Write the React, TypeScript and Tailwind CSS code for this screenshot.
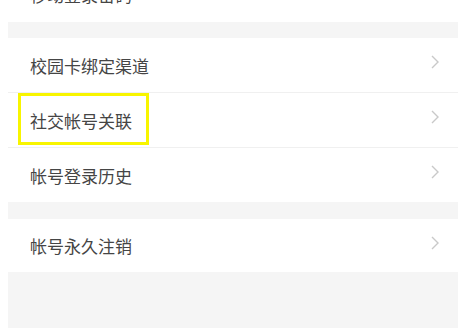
import React from "react";

const font = { fontFamily: '"Noto Sans CJK SC", "Noto Sans", sans-serif' };

function Chevron() {
  return (
    <svg width="10" height="16" viewBox="0 0 10 16" className="-mt-[6px]">
      <path d="M2 2 L8 8 L2 14" fill="none" stroke="#c9c9c9" strokeWidth="1.4" />
    </svg>
  );
}

function Row({
  label,
  border,
  h = "h-[55px]",
  children,
}: {
  label: string;
  border?: boolean;
  h?: string;
  children?: React.ReactNode;
}) {
  return (
    <div
      className={
        "relative flex items-center justify-between bg-white pl-[22px] pr-[18px] " +
        h +
        (border ? " border-b border-[#f0f0f0]" : "")
      }
    >
      <span className="text-[17px] text-[#454545] leading-none">{label}</span>
      <Chevron />
      {children}
    </div>
  );
}

export default function App() {
  return (
    <div className="w-full h-[328px] bg-white pl-[8px] pr-[7px]" style={font}>
      <div className="h-full bg-[#f5f5f5] overflow-hidden">
        {/* partly scrolled-off row */}
        <div className="-mt-[33px]">
          <Row label="移动登录密码" />
        </div>

        {/* account group */}
        <div className="mt-[16px]">
          <Row label="校园卡绑定渠道" border />
          <Row label="社交帐号关联" border>
            <div className="absolute left-[10px] top-0 w-[131px] h-[52px] border-[3px] border-[#f8f500]" />
          </Row>
          <Row label="帐号登录历史" h="h-[54px]" />
        </div>

        <div className="mt-[17px]">
          <Row label="帐号永久注销" h="h-[53px]" />
        </div>
      </div>
    </div>
  );
}
